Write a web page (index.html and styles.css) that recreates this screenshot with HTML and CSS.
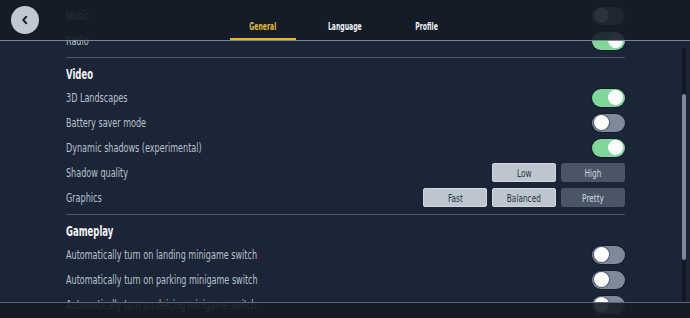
FILE: index.html
```html
<!DOCTYPE html>
<html>
<head>
<meta charset="utf-8">
<link rel="stylesheet" href="styles.css">
</head>
<body>
<div class="page">
  <main class="content">
    <section class="section first">
      <div class="row"><span class="label">Music</span><span class="toggle off"></span></div>
      <div class="row"><span class="label">Radio</span><span class="toggle on"></span></div>
    </section>
    <section class="section">
      <h2 class="title"><span class="title-text">Video</span></h2>
      <div class="row"><span class="label">3D Landscapes</span><span class="toggle on"></span></div>
      <div class="row"><span class="label">Battery saver mode</span><span class="toggle off"></span></div>
      <div class="row"><span class="label">Dynamic shadows (experimental)</span><span class="toggle on"></span></div>
      <div class="row"><span class="label">Shadow quality</span>
        <div class="seg"><span class="btn sel"><span class="btn-text">Low</span></span><span class="btn"><span class="btn-text">High</span></span></div>
      </div>
      <div class="row"><span class="label">Graphics</span>
        <div class="seg"><span class="btn sel"><span class="btn-text">Fast</span></span><span class="btn sel"><span class="btn-text">Balanced</span></span><span class="btn"><span class="btn-text">Pretty</span></span></div>
      </div>
    </section>
    <section class="section">
      <h2 class="title"><span class="title-text">Gameplay</span></h2>
      <div class="row"><span class="label">Automatically turn on landing minigame switch</span><span class="toggle off"></span></div>
      <div class="row"><span class="label">Automatically turn on parking minigame switch</span><span class="toggle off"></span></div>
      <div class="row"><span class="label">Automatically turn on deicing minigame switch</span><span class="toggle off"></span></div>
    </section>
  </main>
  <header class="header">
    <button class="back" aria-label="Back">
      <svg width="10" height="10" viewBox="0 0 10 10"><path d="M6.3 1.8 L3.2 5 L6.3 8.2" fill="none" stroke="#1b2433" stroke-width="2" stroke-linecap="round" stroke-linejoin="round"/></svg>
    </button>
    <nav class="tabs">
      <span class="tab active"><span class="tab-text">General</span></span>
      <span class="tab"><span class="tab-text">Language</span></span>
      <span class="tab"><span class="tab-text">Profile</span></span>
    </nav>
  </header>
  <footer class="footer"></footer>
  <div class="scrollbar"><div class="thumb"></div></div>
</div>
</body>
</html>
```
FILE: styles.css
```css
* { box-sizing: border-box; }
html, body { margin: 0; padding: 0; }
body {
  background: #1b2537;
  font-family: "DejaVu Sans Condensed", "DejaVu Sans", sans-serif;
  width: 690px;
  height: 318px;
  overflow: hidden;
}
.page { position: relative; width: 690px; height: 318px; overflow: hidden; }
.content {
  width: 559px;
  margin-left: 66px;
  padding-top: 3px;
}
.section {
  padding-bottom: 4px;
  border-bottom: 1px solid #4c5668;
}
.title {
  margin: 0;
  padding-top: 5px;
  line-height: 22px;
  font-size: 13.5px;
  font-weight: bold;
  color: #f1f3f6;
}
.title-text {
  display: inline-block;
  transform: scaleX(0.7);
  transform-origin: left center;
}
.row {
  height: 25px;
  display: flex;
  align-items: center;
  justify-content: space-between;
}
.label {
  display: inline-block;
  font-size: 11.5px;
  color: #b8c1cd;
  transform: scaleX(0.78);
  transform-origin: left center;
  white-space: nowrap;
}
.toggle {
  width: 33px;
  height: 18px;
  border-radius: 9px;
  position: relative;
  box-shadow: 0 0 0 1px rgba(10,15,22,0.4);
}
.toggle::after {
  content: "";
  position: absolute;
  top: 1.5px;
  width: 15px;
  height: 15px;
  border-radius: 50%;
  background: #ffffff;
}
.toggle.on { background: #80d69b; }
.toggle.on::after { right: 2px; }
.toggle.off { background: #7e899a; }
.toggle.off::after { left: 1.5px; box-shadow: 0 0 0 1px rgba(40,50,65,0.5); }
.seg { display: flex; gap: 5px; }
.btn {
  width: 64px;
  height: 19px;
  border-radius: 3px;
  display: flex;
  align-items: center;
  justify-content: center;
  font-size: 10.5px;
  background: #4a5565;
  color: #d3d9e0;
}
.btn-text {
  display: inline-block;
  transform: scaleX(0.78);
}
.btn.sel {
  background: #bdc6cf;
  color: #2b3441;
  box-shadow: inset 0 0 0 1px #cfd6dd;
}
.header {
  position: absolute;
  left: 0; top: 0;
  width: 690px;
  height: 41px;
  background: rgba(20, 28, 38, 0.9);
  border-bottom: 1px solid #7c8797;
  display: flex;
  justify-content: center;
}
.back {
  position: absolute;
  left: 11px; top: 6px;
  width: 28px; height: 28px;
  border: none;
  border-radius: 50%;
  background: #c0c8d2;
  padding: 0;
  display: flex;
  align-items: center;
  justify-content: center;
}
.tabs { display: flex; gap: 16px; height: 40px; }
.tab {
  width: 66px;
  display: flex;
  align-items: center;
  justify-content: center;
  padding-top: 15px;
  font-size: 10px;
  font-weight: bold;
  color: #eef1f5;
  border-bottom: 2px solid transparent;
}
.tab-text {
  display: inline-block;
  transform: scaleX(0.68);
}
.tab.active { color: #e3b93c; border-bottom-color: #e8b52a; }
.footer {
  position: absolute;
  left: 0; top: 302px;
  width: 690px; height: 16px;
  background: rgba(20, 28, 38, 0.9);
  border-top: 1px solid #5b6576;
}
.scrollbar {
  position: absolute;
  left: 682px; top: 48px;
  width: 4px; height: 254px;
  background: #111821;
  border-radius: 2px;
}
.thumb {
  margin-top: 46px;
  height: 166px;
  background: #7d8a9c;
  border-radius: 2px;
}
```
